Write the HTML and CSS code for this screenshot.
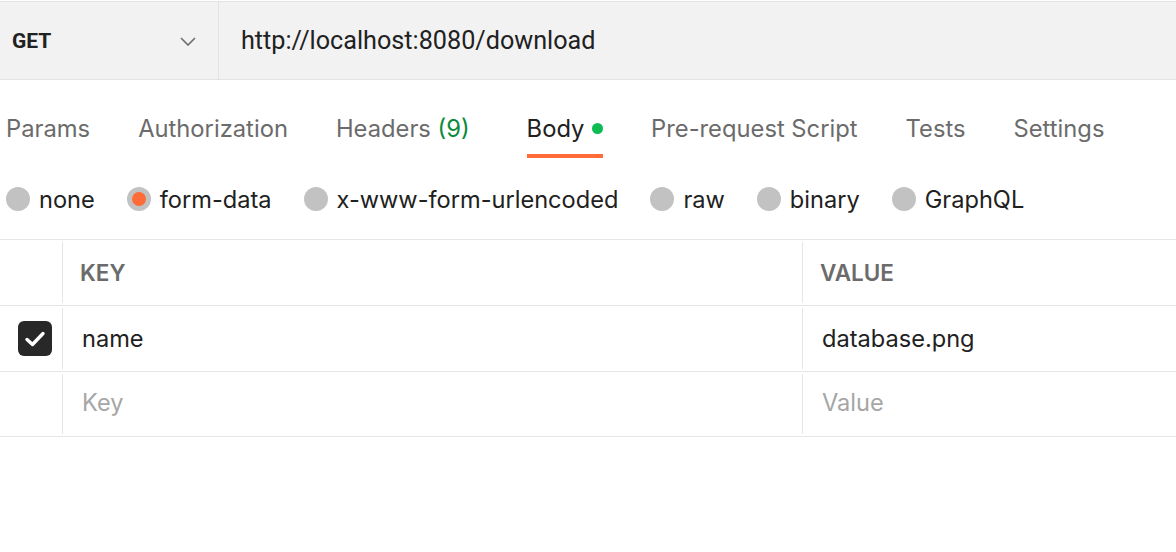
FILE: index.html
```html
<!DOCTYPE html>
<html>
<head>
<meta charset="utf-8">
<link rel="stylesheet" href="styles.css">
</head>
<body>
<div class="urlbar">
  <div class="method">
    <span class="method-name">GET</span>
    <svg class="chev" width="16" height="9" viewBox="0 0 16 9"><path d="M1 1 L8 8 L15 1" fill="none" stroke="#6b6b6b" stroke-width="1.6"/></svg>
  </div>
  <div class="url">http://localhost:8080/download</div>
</div>

<div class="tabs">
  <div class="tab">Params</div>
  <div class="tab">Authorization</div>
  <div class="tab">Headers <span class="count">(9)</span></div>
  <div class="tab active">Body <span class="dot"></span></div>
  <div class="tab">Pre-request Script</div>
  <div class="tab">Tests</div>
  <div class="tab">Settings</div>
</div>

<div class="radios">
  <div class="radio"><span class="circle"></span>none</div>
  <div class="radio"><span class="circle on"></span>form-data</div>
  <div class="radio"><span class="circle"></span>x-www-form-urlencoded</div>
  <div class="radio"><span class="circle"></span>raw</div>
  <div class="radio"><span class="circle"></span>binary</div>
  <div class="radio"><span class="circle"></span>GraphQL</div>
</div>

<div class="table">
  <div class="row head">
    <div class="cell check"></div>
    <div class="cell key">KEY</div>
    <div class="cell value">VALUE</div>
  </div>
  <div class="row">
    <div class="cell check">
      <span class="box"><svg width="22" height="18" viewBox="0 0 22 18"><path d="M3 9.5 L8.5 14.5 L19 3.5" fill="none" stroke="#fff" stroke-width="3.4" stroke-linecap="round" stroke-linejoin="round"/></svg></span>
    </div>
    <div class="cell key text">name</div>
    <div class="cell value text">database.png</div>
  </div>
  <div class="row last">
    <div class="cell check"></div>
    <div class="cell key text placeholder">Key</div>
    <div class="cell value text placeholder">Value</div>
  </div>
</div>
</body>
</html>
```

FILE: styles.css
```css
html, body {
  margin: 0;
  padding: 0;
  background: #ffffff;
  width: 1176px;
  height: 552px;
  overflow: hidden;
  font-family: "Inter", "Noto Sans", sans-serif;
  color: #212121;
}

.urlbar {
  display: flex;
  height: 77px;
  margin-top: 1px;
  border-top: 1px solid #e3e3e3;
  border-bottom: 1px solid #e3e3e3;
  background: #f2f2f2;
  font-family: "Roboto", "Liberation Sans", sans-serif;
}

.method {
  width: 219px;
  border-right: 1px solid #e3e3e3;
  display: flex;
  align-items: center;
  justify-content: space-between;
  padding: 0 22px 0 12px;
  box-sizing: border-box;
  flex: none;
}

.method-name {
  font-size: 21px;
  font-weight: 700;
  color: #212121;
}

.chev {
  display: block;
  margin-top: 2px;
}

.url {
  display: flex;
  align-items: center;
  padding-left: 22px;
  font-size: 25.2px;
  color: #212121;
}

.tabs {
  display: flex;
  gap: 48px;
  padding-left: 6px;
  height: 80px;
  align-items: flex-start;
}

.tab {
  font-size: 23.75px;
  line-height: 29px;
  color: #6b6b6b;
  padding-top: 34px;
  white-space: pre;
  position: relative;
}

.tab .count {
  color: #0c8a3e;
}

.tab.active {
  color: #212121;
  margin-left: 9px;
}

.tab.active::after {
  content: "";
  position: absolute;
  left: 0;
  right: 0;
  top: 74px;
  height: 4px;
  background: #ff6c37;
}

.dot {
  display: inline-block;
  width: 11px;
  height: 11px;
  border-radius: 50%;
  background: #0cbb52;
  vertical-align: 3px;
  margin-left: 1px;
}

.radios {
  display: flex;
  gap: 32px;
  padding-left: 6px;
  height: 79px;
  align-items: flex-start;
  padding-top: 28px;
  box-sizing: border-box;
}

.radio {
  display: flex;
  align-items: center;
  gap: 9px;
  font-size: 23.6px;
  color: #212121;
  line-height: 24px;
}

.circle {
  width: 24px;
  height: 24px;
  border-radius: 50%;
  background: #c2c2c2;
  box-sizing: border-box;
  flex: none;
  margin-top: -2px;
}

.circle.on {
  background: #ff6c37;
  border: 5px solid #c2c2c2;
}

.table {
  border-top: 1px solid #e6e6e6;
}

.row {
  display: flex;
  height: 66px;
  border-bottom: 1px solid #e6e6e6;
  box-sizing: border-box;
}

.row.last {
  height: 65px;
}

.cell {
  display: flex;
  align-items: center;
  box-sizing: border-box;
  margin: 2px 0;
}

.check {
  width: 63px;
  border-right: 1px solid #e6e6e6;
  padding-left: 18px;
  flex: none;
}

.key {
  width: 740px;
  border-right: 1px solid #e6e6e6;
  padding-left: 17px;
  flex: none;
}

.value {
  flex: 1;
  padding-left: 17px;
}

.head .cell {
  font-size: 22.5px;
  font-weight: 600;
  color: #6b6b6b;
}

.text {
  font-size: 23.6px;
  color: #212121;
  padding-left: 19px;
}

.last .text {
  padding-bottom: 4px;
}

.placeholder {
  color: #a6a6a6;
}

.box {
  width: 34px;
  height: 35px;
  border-radius: 6px;
  background: #282828;
  display: flex;
  align-items: center;
  justify-content: center;
}
```
